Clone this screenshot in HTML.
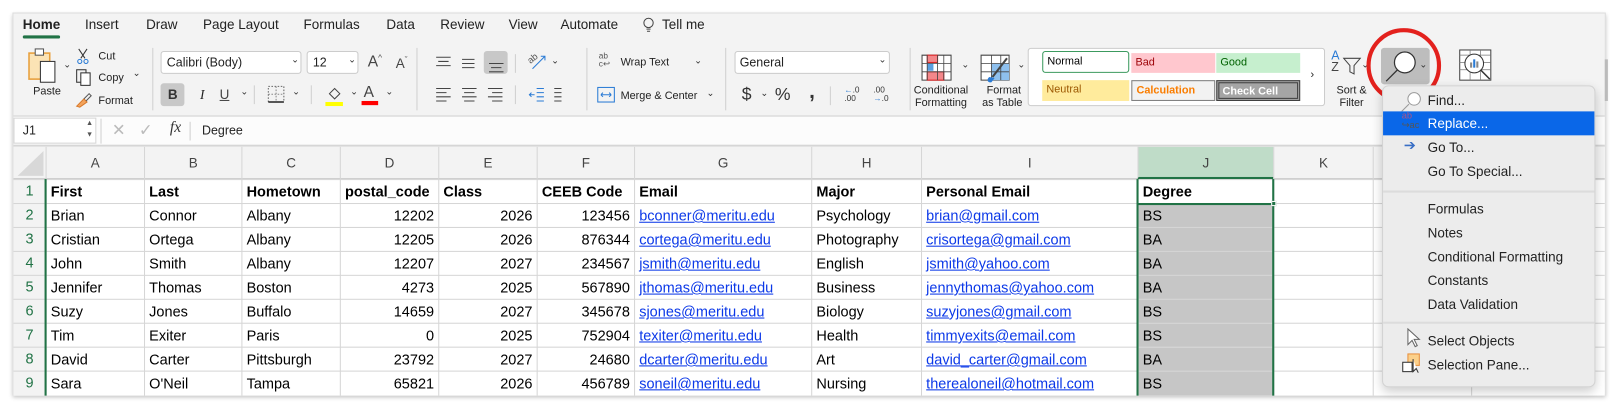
<!DOCTYPE html>
<html><head><meta charset="utf-8"><style>
*{margin:0;padding:0;box-sizing:border-box}
html,body{width:1624px;height:407px;overflow:hidden;background:#fff;font-family:"Liberation Sans",sans-serif;color:#222}
#s{position:absolute;left:0;top:0;width:1568px;height:391px;transform:scale(1.036,1.041);transform-origin:0 0}
.a{position:absolute;white-space:nowrap}
.t{font-size:13px;color:#222}
.sm{font-size:10.5px;color:#222}
.sep{position:absolute;width:1px;background:#d0d0d0}
.chev{position:absolute;font-size:9px;color:#333}
.cell{position:absolute;font-size:14px;color:#000;padding-left:4px;line-height:23px;height:23px;overflow:hidden}
.r{text-align:right;padding-right:4px}
.b{font-weight:bold}
a{color:#0b38e8;text-decoration:underline}
.mi{position:absolute;left:43px;font-size:13px;color:#222}
</style></head><body><div id="s">
<div class="a" style="left:12px;top:12px;width:1538px;height:368px;background:#f3f3f3;border:1px solid #ddd;box-shadow:0 2px 4px rgba(0,0,0,.25)"></div>
<div class="a t b" style="left:22px;top:16px">Home</div>
<div class="a" style="left:22px;top:34px;width:36px;height:3px;background:#217346;border-radius:2px"></div>
<div class="a t" style="left:82px;top:16px">Insert</div>
<div class="a t" style="left:141px;top:16px">Draw</div>
<div class="a t" style="left:196px;top:16px">Page Layout</div>
<div class="a t" style="left:293px;top:16px">Formulas</div>
<div class="a t" style="left:373px;top:16px">Data</div>
<div class="a t" style="left:425px;top:16px">Review</div>
<div class="a t" style="left:491px;top:16px">View</div>
<div class="a t" style="left:541px;top:16px">Automate</div>
<svg class="a" style="left:620px;top:16px" width="12" height="16"><circle cx="6" cy="6" r="4.5" fill="none" stroke="#444"/><path d="M4 12h4M4.5 14h3" stroke="#444"/></svg>
<div class="a t" style="left:639px;top:16px">Tell me</div>

<svg class="a" style="left:27px;top:46px" width="34" height="36"><rect x="1" y="5" width="20" height="25" fill="#fbe3b5" stroke="#e8a03d" stroke-width="1.5"/><rect x="7" y="1" width="8" height="6" fill="#fff" stroke="#555"/><rect x="12" y="13" width="14" height="20" fill="#fff" stroke="#333"/></svg>
<div class="chev" style="left:61px;top:57px">⌄</div>
<div class="a sm" style="left:32px;top:82px">Paste</div>
<svg class="a" style="left:74px;top:46px" width="12" height="16"><path d="M2 1l6 9M10 1L4 10" stroke="#333"/><circle cx="3" cy="13" r="2" fill="none" stroke="#2a7bd5"/><circle cx="9" cy="13" r="2" fill="none" stroke="#2a7bd5"/></svg>
<div class="a sm" style="left:95px;top:48px">Cut</div>
<svg class="a" style="left:73px;top:66px" width="16" height="18"><rect x="1" y="1" width="9" height="12" fill="none" stroke="#333"/><rect x="5" y="4" width="9" height="12" fill="#fff" stroke="#333"/></svg>
<div class="a sm" style="left:95px;top:69px">Copy</div><div class="chev" style="left:128px;top:65px">⌄</div>
<svg class="a" style="left:72px;top:88px" width="18" height="16"><path d="M2 14l7-7 3 3-7 5z" fill="#f3a35c" stroke="#d87a2c"/><path d="M9 7l5-5 2 2-5 5" fill="none" stroke="#555"/></svg>
<div class="a sm" style="left:95px;top:91px">Format</div>
<div class="sep" style="left:147px;top:46px;height:60px"></div>
<div class="a" style="left:155px;top:49px;width:136px;height:22px;background:#fff;border:1px solid #ccc;border-radius:3px"></div>
<div class="a" style="left:161px;top:53px;font-size:12px">Calibri (Body)</div><div class="chev" style="left:281px;top:52px">⌄</div>
<div class="a" style="left:296px;top:49px;width:50px;height:22px;background:#fff;border:1px solid #ccc;border-radius:3px"></div>
<div class="a" style="left:302px;top:53px;font-size:12px">12</div><div class="chev" style="left:336px;top:52px">⌄</div>
<div class="a" style="left:355px;top:51px;font-size:15px;color:#444">A<sup style="font-size:8px">^</sup></div>
<div class="a" style="left:382px;top:53px;font-size:13px;color:#444">A<sup style="font-size:8px">ˇ</sup></div>
<div class="a" style="left:155px;top:80px;width:23px;height:22px;background:#c8c8c8;border-radius:3px"></div>
<div class="a b" style="left:162px;top:83px;font-size:13px;color:#333">B</div>
<div class="a" style="left:193px;top:83px;font-size:13px;font-style:italic;font-family:'Liberation Serif',serif">I</div>
<div class="a" style="left:212px;top:83px;font-size:13px;text-decoration:underline;color:#444">U</div><div class="chev" style="left:232px;top:83px">⌄</div>
<div class="sep" style="left:245px;top:82px;height:18px"></div>
<svg class="a" style="left:258px;top:82px" width="18" height="18"><rect x="1" y="1" width="15" height="15" fill="none" stroke="#666" stroke-dasharray="1.5 1.5"/><path d="M1 16h15" stroke="#222" stroke-width="1.5"/><path d="M8.5 1v15M1 8.5h15" stroke="#888" stroke-dasharray="1.5 1.5"/></svg>
<div class="chev" style="left:282px;top:83px">⌄</div>
<div class="sep" style="left:300px;top:82px;height:18px"></div>
<svg class="a" style="left:314px;top:82px" width="18" height="20"><path d="M4 8l5-5 5 5-5 5z" fill="none" stroke="#444"/><rect x="0" y="16" width="17" height="4" fill="#ffff00"/></svg>
<div class="chev" style="left:338px;top:83px">⌄</div>
<div class="a" style="left:351px;top:80px;font-size:15px;color:#444">A</div>
<div class="a" style="left:349px;top:97px;width:16px;height:4px;background:#f00"></div>
<div class="chev" style="left:372px;top:83px">⌄</div>
<div class="sep" style="left:402px;top:46px;height:60px"></div>
<svg class="a" style="left:420px;top:52px" width="80" height="18"><path d="M1 3h14M3 7h10M1 11h14" stroke="#444"/><path d="M26 5h12M26 9h12M26 13h12" stroke="#444"/></svg>
<div class="a" style="left:467px;top:49px;width:23px;height:22px;background:#c8c8c8;border-radius:3px"></div>
<svg class="a" style="left:471px;top:52px" width="16" height="18"><path d="M1 9h14M3 13h10M1 17h14" stroke="#444"/></svg>
<svg class="a" style="left:420px;top:83px" width="80" height="16"><path d="M1 2h14M1 6h10M1 10h14M1 14h10" stroke="#444"/><path d="M26 2h14M28 6h10M26 10h14M28 14h10" stroke="#444"/><path d="M51 2h14M55 6h10M51 10h14M55 14h10" stroke="#444"/></svg>
<div class="sep" style="left:497px;top:52px;height:18px"></div><div class="sep" style="left:497px;top:82px;height:18px"></div>
<div class="a" style="left:509px;top:51px;font-size:9px;color:#555;transform:rotate(-40deg)">ab</div>
<svg class="a" style="left:512px;top:52px" width="16" height="16"><path d="M2 14L14 2M10 2h4v4" stroke="#2a7bd5" fill="none"/></svg>
<div class="chev" style="left:532px;top:53px">⌄</div>
<svg class="a" style="left:510px;top:83px" width="44" height="16"><path d="M8 2h7M8 6h7M8 10h7M8 14h7M6 8H1M3 6L1 8l2 2" stroke="#2a7bd5" fill="none"/><path d="M25 2h7M25 6h7M25 10h7M25 14h7" stroke="#444"/></svg>
<div class="sep" style="left:566px;top:46px;height:60px"></div>
<div class="a" style="left:578px;top:50px;font-size:8px;color:#555;line-height:8px">ab<br>c↩</div>
<div class="a sm" style="left:599px;top:54px">Wrap Text</div><div class="chev" style="left:670px;top:53px">⌄</div>
<svg class="a" style="left:576px;top:83px" width="18" height="16"><rect x="1" y="1" width="16" height="14" fill="none" stroke="#2a7bd5"/><path d="M4 8h10M4 8l2-2M4 8l2 2M14 8l-2-2M14 8l-2 2" stroke="#2a7bd5" fill="none"/></svg>
<div class="a sm" style="left:599px;top:86px">Merge &amp; Center</div><div class="chev" style="left:682px;top:84px">⌄</div>
<div class="sep" style="left:700px;top:46px;height:60px"></div>
<div class="a" style="left:709px;top:49px;width:150px;height:22px;background:#fff;border:1px solid #ccc;border-radius:3px"></div>
<div class="a" style="left:714px;top:53px;font-size:12px">General</div><div class="chev" style="left:848px;top:52px">⌄</div>
<div class="a" style="left:716px;top:81px;font-size:17px;color:#333">$</div><div class="chev" style="left:734px;top:84px">⌄</div>
<div class="a" style="left:748px;top:81px;font-size:17px;color:#333">%</div>
<div class="a b" style="left:781px;top:77px;font-size:20px;color:#333">,</div>
<div class="sep" style="left:801px;top:83px;height:18px"></div>
<div class="a" style="left:815px;top:83px;font-size:8px;line-height:8px;color:#333"><span style="color:#2a7bd5">←</span>.0<br>.00</div>
<div class="a" style="left:843px;top:83px;font-size:8px;line-height:8px;color:#333">.00<br><span style="color:#2a7bd5">→</span>.0</div>
<div class="sep" style="left:878px;top:46px;height:60px"></div>
<svg class="a" style="left:889px;top:52px" width="30" height="26"><path d="M1 1h28v24H1z" fill="#fff" stroke="#444"/><rect x="6" y="1" width="10" height="7" fill="#f4878a" stroke="#d22"/><rect x="6" y="9" width="6" height="7" fill="#5a9fe0"/><rect x="6" y="17" width="16" height="8" fill="#f4878a" stroke="#d22"/><path d="M6 1v24M16 1v24M22 1v24M1 9h28M1 17h28" stroke="#444" stroke-width=".8"/></svg>
<div class="chev" style="left:928px;top:57px">⌄</div>
<div class="a sm" style="left:882px;top:81px;line-height:12px;text-align:center">Conditional<br>Formatting</div>
<svg class="a" style="left:946px;top:52px" width="30" height="30"><path d="M1 1h27v24H1z" fill="#fff" stroke="#444"/><rect x="11" y="9" width="17" height="16" fill="#8ec0ee"/><path d="M1 9h27M1 17h27M11 1v24M20 1v24" stroke="#444" stroke-width=".8"/><path d="M26 4L12 22" stroke="#444" stroke-width="2"/><path d="M9 22c-3 2-2 6 2 5l3-4z" fill="#2a7bd5"/></svg>
<div class="chev" style="left:982px;top:57px">⌄</div>
<div class="a sm" style="left:948px;top:81px;line-height:12px;text-align:center">&nbsp;Format<br>as Table</div>
<div class="a" style="left:992px;top:46px;width:287px;height:56px;background:#fff;border:1px solid #ccc;border-radius:3px"></div>
<div class="a sm" style="left:1006px;top:49px;width:84px;height:21px;border:1px solid #3c9a5f;border-radius:3px;padding:3px 4px;color:#000">Normal</div>
<div class="a sm" style="left:1092px;top:51px;width:81px;height:19px;background:#ffc7ce;color:#9c0006;padding:3px 4px">Bad</div>
<div class="a sm" style="left:1174px;top:51px;width:81px;height:19px;background:#c6efce;color:#006100;padding:3px 4px">Good</div>
<div class="a sm" style="left:1006px;top:77px;width:84px;height:20px;background:#ffeb9c;color:#9c5700;padding:3px 4px">Neutral</div>
<div class="a sm b" style="left:1092px;top:77px;width:81px;height:20px;background:#f2f2f2;border:1px solid #7f7f7f;color:#fa7d00;padding:3px 4px">Calculation</div>
<div class="a sm b" style="left:1174px;top:77px;width:81px;height:20px;background:#a5a5a5;border:3px double #3f3f3f;color:#fff;padding:2px 3px">Check Cell</div>
<div class="a sm" style="left:1265px;top:66px">›</div>
<div class="a" style="left:1285px;top:48px;font-size:12px;line-height:11px;color:#2a7bd5">A<br><span style="color:#444">Z</span></div>
<svg class="a" style="left:1296px;top:55px" width="18" height="18"><path d="M1 1h16l-6 7v8l-4-2V8z" fill="none" stroke="#444"/></svg>
<div class="chev" style="left:1314px;top:57px">⌄</div>
<div class="a sm" style="left:1290px;top:81px;line-height:12px;text-align:center">Sort &amp;<br>Filter</div>
<div class="a" style="left:1333px;top:46px;width:47px;height:35px;background:#bdbdbd;border-radius:3px"></div>
<svg class="a" style="left:1335px;top:47px" width="40" height="34"><circle cx="21" cy="13" r="10" fill="#fff" stroke="#333" stroke-width="1.2"/><path d="M14 20L3 31" stroke="#333" stroke-width="1.2"/></svg>
<div class="chev" style="left:1370px;top:57px">⌄</div>
<div class="a" style="left:1319px;top:27px;width:72px;height:72px;border:4px solid #e3211d;border-radius:50%"></div>
<svg class="a" style="left:1408px;top:47px" width="34" height="32"><rect x="1" y="1" width="30" height="29" fill="#fff" stroke="#444"/><path d="M1 6h30M1 13h30M1 20h30M11 1v29M21 1v29" stroke="#777" stroke-width=".7"/><circle cx="15" cy="14" r="9" fill="#fff" stroke="#333"/><rect x="11" y="13" width="2" height="5" fill="#888"/><rect x="14" y="10" width="2" height="8" fill="#2a7bd5"/><rect x="17" y="12" width="2" height="6" fill="#888"/><path d="M21 20l9 9" stroke="#333" stroke-width="1.5"/></svg>
<div class="a" style="left:1549px;top:57px;width:3px;height:40px;background:#bbb"></div>
<div class="a" style="left:13px;top:111px;width:1536px;height:1px;background:#cfcfcf"></div>
<div class="a" style="left:13px;top:112px;width:1536px;height:28px;background:#fcfcfc"></div>
<div class="a" style="left:13px;top:113px;width:80px;height:25px;background:#fff;border:1px solid #d6d6d6"></div>
<div class="a" style="left:22px;top:118px;font-size:12px">J1</div>
<div class="a" style="left:83px;top:113px;font-size:7px;line-height:11px;color:#555">▲<br>▼</div>
<div class="sep" style="left:97px;top:114px;height:24px"></div>
<div class="a" style="left:108px;top:115px;font-size:16px;color:#bbb">✕</div>
<div class="a" style="left:134px;top:115px;font-size:16px;color:#bbb">✓</div>
<div class="a" style="left:164px;top:115px;font-size:15px;font-style:italic;font-family:'Liberation Serif',serif;color:#333">fx</div>
<div class="sep" style="left:183px;top:117px;height:18px"></div>
<div class="a" style="left:195px;top:118px;font-size:12px">Degree</div>
<div class="a" style="left:13px;top:139px;width:1536px;height:2px;background:#d6d6d6"></div>
<div id="g" class="a" style="left:13px;top:141px;width:1536px;height:239px;background:#fff;overflow:hidden"></div>
<div class="a" style="left:1334px;top:82px;width:206px;height:290px;background:#ececec;border:1px solid #d3d3d3;border-radius:6px;box-shadow:0 4px 10px rgba(0,0,0,.2)">
<svg class="a" style="left:16px;top:4px" width="22" height="22"><circle cx="14" cy="8" r="6" fill="#fff" stroke="#999"/><path d="M9 13L2 20" stroke="#999"/></svg>
<div class="mi" style="top:6px">Find...</div>
<div class="a" style="left:0;top:24px;width:204px;height:23px;background:#0a67e8"></div>
<div class="a" style="left:18px;top:24px;font-size:9px;line-height:9px"><span style="color:#a58">ab</span><br><span style="color:#555">↪ac</span></div>
<div class="mi" style="top:28px;color:#fff">Replace...</div>
<div class="a" style="left:20px;top:48px;font-size:14px;color:#3a6fc5">➔</div>
<div class="mi" style="top:51px">Go To...</div>
<div class="mi" style="top:74px">Go To Special...</div>
<div class="a" style="left:0;top:100px;width:204px;height:2px;background:#dcdcdc"></div>
<div class="mi" style="top:110px">Formulas</div>
<div class="mi" style="top:133px">Notes</div>
<div class="mi" style="top:156px">Conditional Formatting</div>
<div class="mi" style="top:179px">Constants</div>
<div class="mi" style="top:202px">Data Validation</div>
<div class="a" style="left:0;top:226px;width:204px;height:2px;background:#dcdcdc"></div>
<svg class="a" style="left:22px;top:232px" width="16" height="20"><path d="M2 1v15l4-4 3 6 2-1-3-6h5z" fill="#fff" stroke="#666"/></svg>
<div class="mi" style="top:237px">Select Objects</div>
<svg class="a" style="left:18px;top:256px" width="22" height="20"><rect x="6" y="1" width="11" height="11" fill="#fbd08a" stroke="#e8903d"/><rect x="1" y="9" width="9" height="9" fill="#fff" stroke="#333"/><path d="M11 6v12l3-3 2 4" fill="#fff" stroke="#333"/></svg>
<div class="mi" style="top:260px">Selection Pane...</div>
</div>
<script>
var cols=[44,139,233,328,423,518,612,783,889,1098,1229,1325,1420,1516,1612];
var L='ABCDEFGHIJKLM';
var data=[
["First","Last","Hometown","postal_code","Class","CEEB Code","Email","Major","Personal Email","Degree"],
["Brian","Connor","Albany","12202","2026","123456","bconner@meritu.edu","Psychology","brian@gmail.com","BS"],
["Cristian","Ortega","Albany","12205","2026","876344","cortega@meritu.edu","Photography","crisortega@gmail.com","BA"],
["John","Smith","Albany","12207","2027","234567","jsmith@meritu.edu","English","jsmith@yahoo.com","BA"],
["Jennifer","Thomas","Boston","4273","2025","567890","jthomas@meritu.edu","Business","jennythomas@yahoo.com","BA"],
["Suzy","Jones","Buffalo","14659","2027","345678","sjones@meritu.edu","Biology","suzyjones@gmail.com","BS"],
["Tim","Exiter","Paris","0","2025","752904","texiter@meritu.edu","Health","timmyexits@email.com","BS"],
["David","Carter","Pittsburgh","23792","2027","24680","dcarter@meritu.edu","Art","david_carter@gmail.com","BA"],
["Sara","O'Neil","Tampa","65821","2026","456789","soneil@meritu.edu","Nursing","therealoneil@hotmail.com","BS"]];
var h='',o=13;
h+='<div class="a" style="left:0;top:0;width:1540px;height:31px;background:#f3f3f3;border-bottom:1px solid #cfcfcf"></div>';
h+='<div class="a" style="left:0;top:31px;width:31px;height:210px;background:#f3f3f3"></div>';
h+='<div class="a" style="left:4px;top:4px;width:0;height:0;border-left:25px solid transparent;border-bottom:24px solid #d8d8d8"></div>';
for(var i=0;i<13;i++){var x=cols[i]-o,w=cols[i+1]-cols[i];
 var sel=i==9;
 h+='<div class="a" style="left:'+x+'px;top:0;width:'+w+'px;height:31px;text-align:center;line-height:31px;font-size:13px;color:#444;border-left:1px solid #d6d6d6;'+(sel?'background:#bfdcc8;border-bottom:2px solid #217346;':'')+'">'+L[i]+'</div>';
 h+='<div class="a" style="left:'+x+'px;top:31px;width:1px;height:210px;background:#d6d6d6"></div>';}
for(var r=0;r<9;r++){var y=31+r*23;
 h+='<div class="a" style="left:0;top:'+y+'px;width:1540px;height:1px;background:#d6d6d6"></div>';
 h+='<div class="a" style="left:0;top:'+y+'px;width:31px;height:23px;line-height:23px;text-align:center;font-size:14px;color:#217346">'+(r+1)+'</div>';
 for(var c=0;c<10;c++){var v=data[r][c],x=cols[c]-o+1,w=cols[c+1]-cols[c]-1;
  var num=r>0&&c>=3&&c<=5,cls='cell'+(num?' r':'')+(r==0?' b':'');
  var bg=(c==9&&r>0)?'background:#c6c6c6;':'';
  if(r>0&&(c==6||c==8))v='<a>'+v+'</a>';
  h+='<div class="'+cls+'" style="left:'+x+'px;top:'+(y+1)+'px;width:'+w+'px;'+bg+'">'+v+'</div>';}}
h+='<div class="a" style="left:30px;top:31px;width:2px;height:210px;background:#217346"></div>';
h+='<div class="a" style="left:'+(1098-o-1)+'px;top:31px;width:2px;height:210px;background:#217346"></div>';
h+='<div class="a" style="left:'+(1229-o-1)+'px;top:31px;width:2px;height:210px;background:#217346"></div>';
h+='<div class="a" style="left:'+(1098-o-1)+'px;top:54px;width:133px;height:2px;background:#217346"></div>';
h+='<div class="a" style="left:'+(1229-o-2)+'px;top:52px;width:5px;height:5px;background:#217346;border:1px solid #fff"></div>';
document.getElementById('g').innerHTML=h;
</script>
</div></body></html>
